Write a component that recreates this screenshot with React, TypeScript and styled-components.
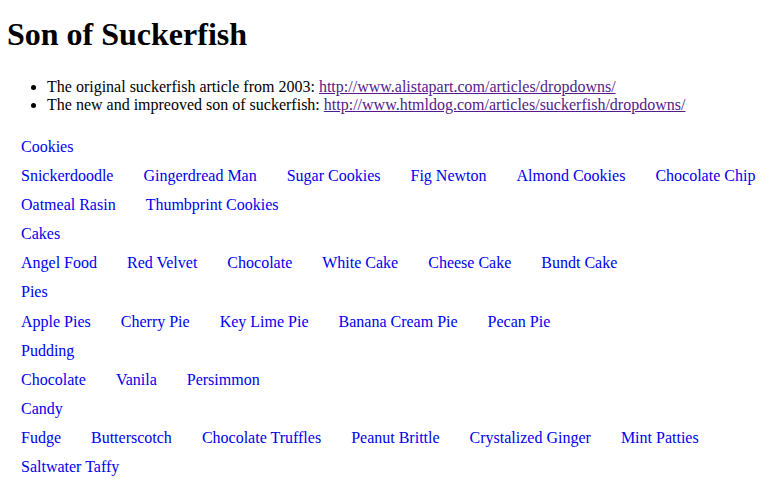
import React from "react";
import styled, { createGlobalStyle } from "styled-components";

const Global = createGlobalStyle`
  html, body { margin: 0; padding: 0; background: #fff; }
  body { font-family: "Liberation Serif", "Times New Roman", serif; color: #000; }
`;

const Page = styled.div`
  padding: 8px 8px 0 8px;
`;

const Title = styled.h1`
  margin: 8px 0 0 -1px;
  font-size: 32px;
  line-height: 37px;
  font-weight: bold;
`;

const Refs = styled.ul`
  margin: 25px 0 0 0;
  padding-left: 39px;
  font-size: 16px;
  line-height: 18px;
  list-style: disc;
`;

const RefLink = styled.a`
  color: #551a8b;
  text-decoration: underline;
`;

const Nav = styled.div`
  margin-top: 18px;
  padding-left: 13px;
  font-size: 16px;
`;

const Category = styled.div`
  display: flex;
  flex-direction: column;
`;

const Row = styled.div`
  display: flex;
  flex-wrap: wrap;
  column-gap: 30px;
`;

const Item = styled.a`
  display: block;
  color: #0000ee;
  text-decoration: none;
  line-height: 19.1px;
  padding: 5px 0;
  white-space: nowrap;
`;

const menu: { title: string; items: string[] }[] = [
  {
    title: "Cookies",
    items: [
      "Snickerdoodle",
      "Gingerdread Man",
      "Sugar Cookies",
      "Fig Newton",
      "Almond Cookies",
      "Chocolate Chip",
      "Oatmeal Rasin",
      "Thumbprint Cookies",
    ],
  },
  {
    title: "Cakes",
    items: ["Angel Food", "Red Velvet", "Chocolate", "White Cake", "Cheese Cake", "Bundt Cake"],
  },
  {
    title: "Pies",
    items: ["Apple Pies", "Cherry Pie", "Key Lime Pie", "Banana Cream Pie", "Pecan Pie"],
  },
  { title: "Pudding", items: ["Chocolate", "Vanila", "Persimmon"] },
  {
    title: "Candy",
    items: [
      "Fudge",
      "Butterscotch",
      "Chocolate Truffles",
      "Peanut Brittle",
      "Crystalized Ginger",
      "Mint Patties",
      "Saltwater Taffy",
    ],
  },
];

export default function App() {
  return (
    <>
      <Global />
      <Page>
        <Title>Son of Suckerfish</Title>
        <Refs>
          <li>
            The original suckerfish article from 2003:{" "}
            <RefLink href="#">http://www.alistapart.com/articles/dropdowns/</RefLink>
          </li>
          <li>
            The new and impreoved son of suckerfish:{" "}
            <RefLink href="#">http://www.htmldog.com/articles/suckerfish/dropdowns/</RefLink>
          </li>
        </Refs>
        <Nav>
          {menu.map((c) => (
            <Category key={c.title}>
              <Row>
                <Item href="#">{c.title}</Item>
              </Row>
              <Row>
                {c.items.map((i) => (
                  <Item href="#" key={i}>
                    {i}
                  </Item>
                ))}
              </Row>
            </Category>
          ))}
        </Nav>
      </Page>
    </>
  );
}
